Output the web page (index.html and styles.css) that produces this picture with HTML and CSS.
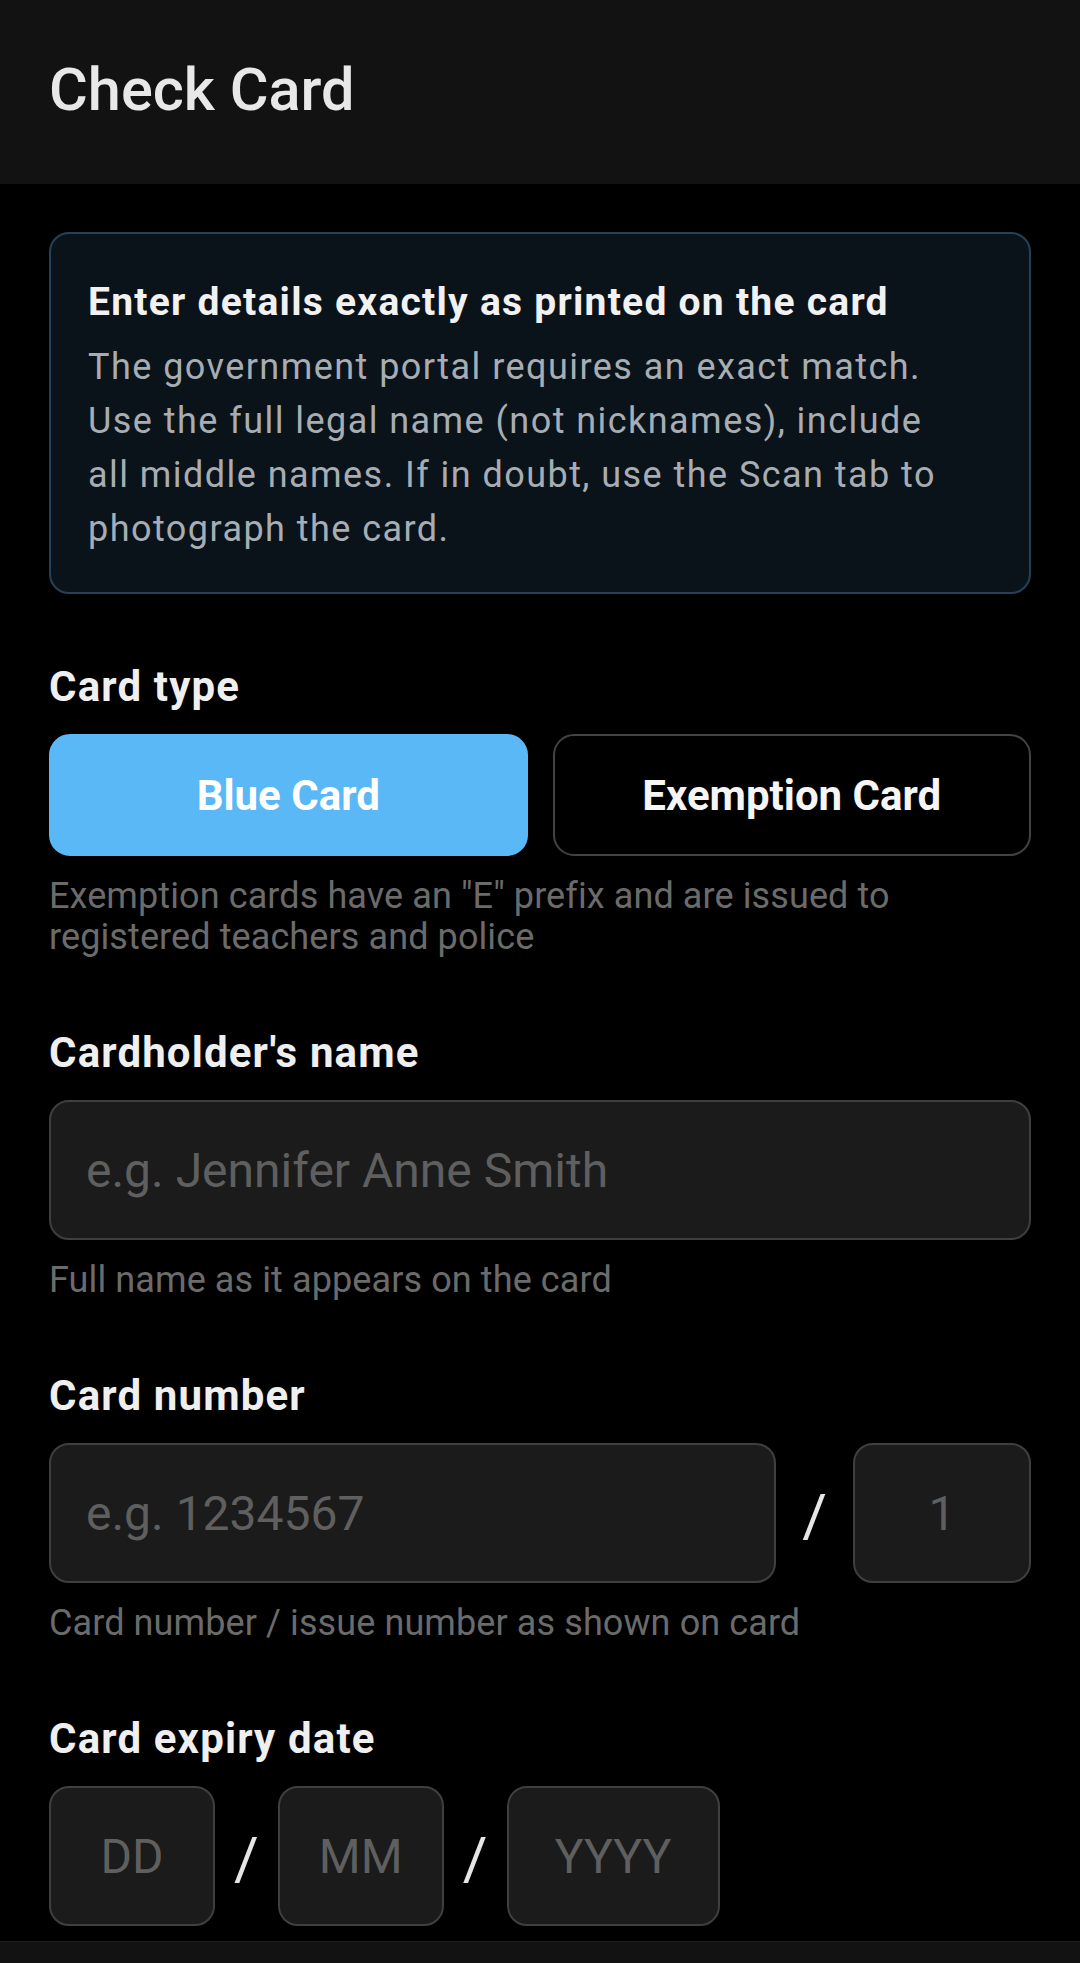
FILE: index.html
```html
<!DOCTYPE html>
<html lang="en">
<head>
<meta charset="utf-8">
<title>Check Card</title>
<link rel="stylesheet" href="styles.css">
</head>
<body>
<header class="appbar">
  <h1 class="appbar-title">Check Card</h1>
</header>
<main class="content">
  <section class="notice">
    <h2 class="notice-title">Enter details exactly as printed on the card</h2>
    <p class="notice-text">The government portal requires an exact match. Use the full legal name (not nicknames), include all middle names. If in doubt, use the Scan tab to photograph the card.</p>
  </section>

  <section class="field">
    <div class="field-label">Card type</div>
    <div class="toggle">
      <button class="toggle-btn is-active" type="button">Blue Card</button>
      <button class="toggle-btn" type="button">Exemption Card</button>
    </div>
    <p class="field-help">Exemption cards have an "E" prefix and are issued to registered teachers and police</p>
  </section>

  <section class="field">
    <div class="field-label">Cardholder's name</div>
    <input class="text-input" type="text" placeholder="e.g. Jennifer Anne Smith">
    <p class="field-help">Full name as it appears on the card</p>
  </section>

  <section class="field">
    <div class="field-label">Card number</div>
    <div class="input-row">
      <input class="text-input grow" type="text" placeholder="e.g. 1234567">
      <span class="sep sep-wide">/</span>
      <input class="text-input center issue" type="text" placeholder="1">
    </div>
    <p class="field-help">Card number / issue number as shown on card</p>
  </section>

  <section class="field">
    <div class="field-label">Card expiry date</div>
    <div class="input-row">
      <input class="text-input center day" type="text" placeholder="DD">
      <span class="sep">/</span>
      <input class="text-input center month" type="text" placeholder="MM">
      <span class="sep">/</span>
      <input class="text-input center year" type="text" placeholder="YYYY">
    </div>
  </section>
</main>
<nav class="bottom-bar"></nav>
</body>
</html>
```

FILE: styles.css
```css
* {
  box-sizing: border-box;
}

html, body {
  margin: 0;
  padding: 0;
  background: #000000;
}

body {
  font-family: Roboto, "Noto Sans", "Liberation Sans", sans-serif;
  color: #ececec;
}

.appbar {
  height: 184px;
  background: #121212;
  padding: 54px 49px 0;
}

.appbar-title {
  margin: 0;
  font-size: 59.5px;
  line-height: 72px;
  font-weight: 500;
  color: #e8e8e8;
}

.content {
  padding: 48px 49px 60px;
}

.notice {
  background: #0b131a;
  border: 2px solid #244257;
  border-radius: 20px;
  padding: 44px 75px 36px 37px;
}

.notice-title {
  margin: 0;
  font-size: 39px;
  line-height: 48px;
  font-weight: 700;
  letter-spacing: 1.25px;
  color: #f1f1f1;
}

.notice-text {
  margin: 14px 0 0;
  font-size: 36px;
  line-height: 54px;
  letter-spacing: 1.45px;
  color: #a7adb3;
}

.field {
  margin-top: 70px;
}

.notice + .field {
  margin-top: 68px;
}

.field-label {
  font-size: 42px;
  line-height: 50px;
  font-weight: 700;
  letter-spacing: 1.15px;
  color: #efefef;
  margin-bottom: 22px;
}

.field-help {
  margin: 20px 0 0;
  font-size: 36px;
  line-height: 41px;
  letter-spacing: 0.1px;
  color: #6b6b6b;
}

.toggle {
  display: flex;
  gap: 25px;
}

.toggle-btn {
  flex: 1;
  height: 122px;
  border-radius: 21px;
  border: 2px solid #434343;
  background: transparent;
  color: #f5f5f5;
  font-family: Roboto, "Noto Sans", "Liberation Sans", sans-serif;
  font-size: 42px;
  font-weight: 700;
  padding: 0;
}

.toggle-btn.is-active {
  background: #5ab8f6;
  border-color: #5ab8f6;
  color: #ffffff;
}

.text-input {
  display: block;
  width: 100%;
  height: 140px;
  border: 2px solid #3f3f3f;
  border-radius: 20px;
  background: #1b1b1b;
  color: #e0e0e0;
  font-family: Roboto, "Noto Sans", "Liberation Sans", sans-serif;
  font-size: 48px;
  padding: 0 35px;
  outline: none;
}

.text-input::placeholder {
  color: #5f5f5f;
  opacity: 1;
}

.text-input.center {
  text-align: center;
  padding: 0 8px;
}

.input-row {
  display: flex;
  align-items: center;
}

.grow {
  flex: 1;
  width: auto;
  min-width: 0;
}

.issue {
  width: 178px;
  flex: none;
}

.day,
.month {
  width: 166px;
  flex: none;
}

.year {
  width: 213px;
  flex: none;
}

.sep {
  font-size: 60px;
  line-height: 70px;
  padding-top: 6px;
  color: #e6e6e6;
  margin: 0 19px;
}

.sep-wide {
  margin: 0 26px;
}

.bottom-bar {
  position: fixed;
  left: 0;
  right: 0;
  bottom: 0;
  height: 22px;
  background: #121212;
  border-top: 1px solid #1f1f1f;
}
```
